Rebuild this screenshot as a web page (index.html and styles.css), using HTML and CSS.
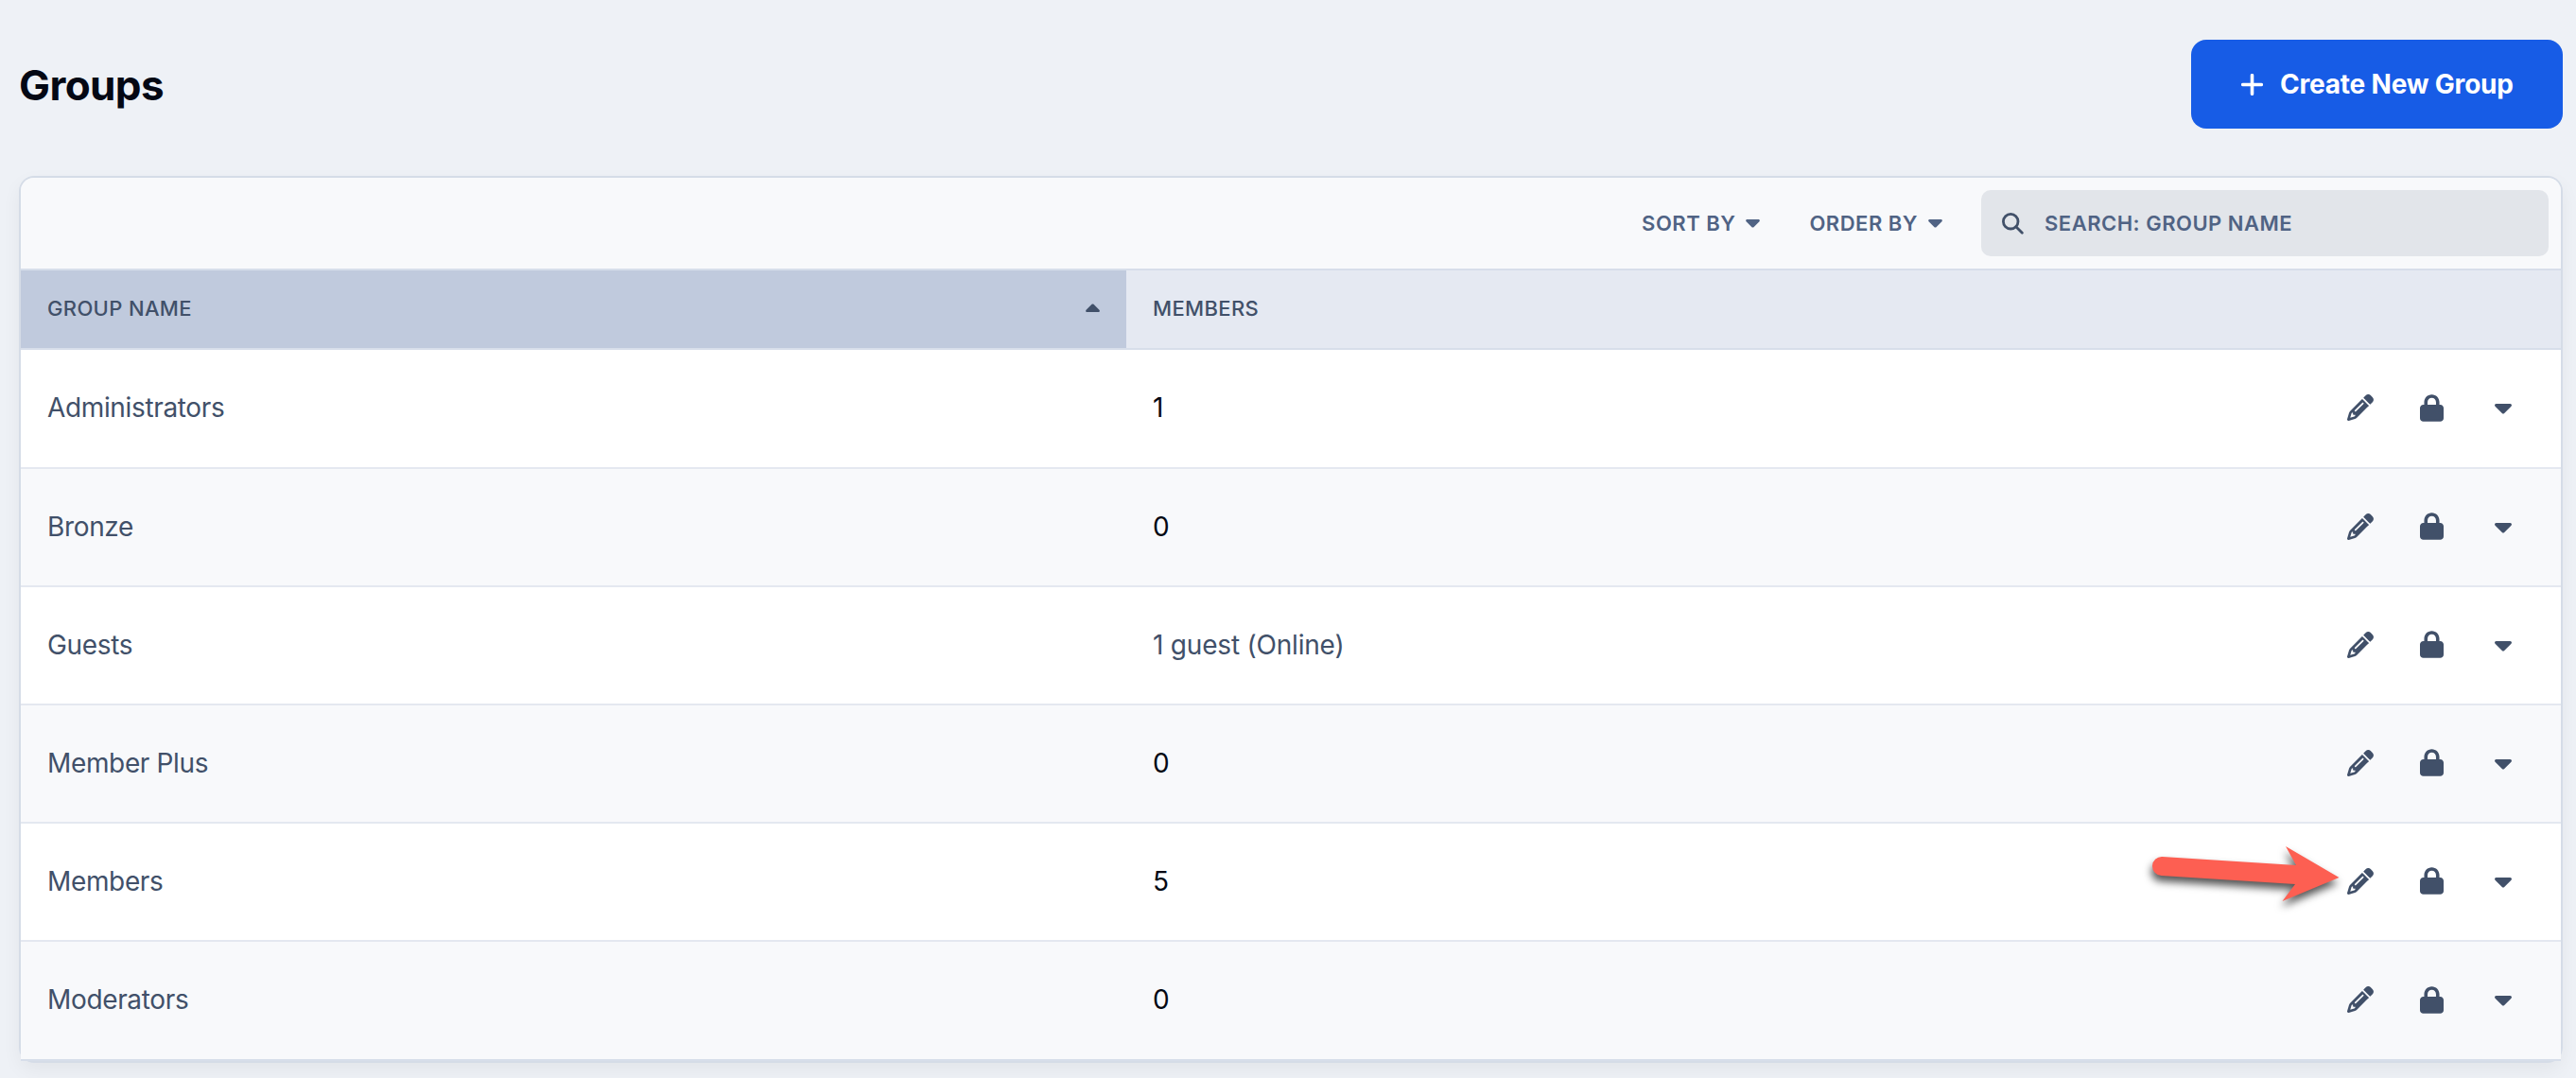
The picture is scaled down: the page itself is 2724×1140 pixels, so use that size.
FILE: index.html
```html
<!DOCTYPE html>
<html lang="en">
    <head>
        <meta charset="utf-8">
        <meta name="viewport" content="width=device-width, initial-scale=1">
        <title>Groups</title>

        <link rel="stylesheet" href="styles.css">
    </head>

    <body>
        <!-- icons shared by all the rows -->
        <svg class="sprite">
            <symbol id="pencil" viewBox="0 0 512 512"><path d="M410.3 231l11.3-11.3-33.9-33.9-62.1-62.1L291.7 89.8l-11.3 11.3-22.6 22.6L58.6 322.9c-10.4 10.4-18 23.3-22.2 37.4L1 480.7c-2.5 8.4-.2 17.5 6.1 23.7s15.3 8.5 23.7 6.1l120.3-35.4c14.1-4.2 27-11.8 37.4-22.2L387.7 253.7 410.3 231zM160 399.4l-9.1 22.7c-4 3.1-8.5 5.4-13.3 6.9L59.4 452l23-78.1c1.4-4.9 3.8-9.4 6.9-13.3l22.7-9.1v32c0 8.8 7.2 16 16 16h32zM362.7 18.7L348.3 33.2 325.7 55.8 314.3 67.1l33.9 33.9 62.1 62.1 33.9 33.9 11.3-11.3 22.6-22.6 14.5-14.5c25-25 25-65.5 0-90.5L453.3 18.7c-25-25-65.5-25-90.5 0zm-47.4 168l-144 144c-6.2 6.2-16.4 6.2-22.6 0s-6.2-16.4 0-22.6l144-144c6.2-6.2 16.4-6.2 22.6 0s6.2 16.4 0 22.6z"/></symbol>
            <symbol id="lock" viewBox="0 0 448 512"><path d="M144 144v48H304V144c0-44.2-35.8-80-80-80s-80 35.8-80 80zM80 192V144C80 64.5 144.5 0 224 0s144 64.5 144 144v48h16c35.3 0 64 28.7 64 64V448c0 35.3-28.7 64-64 64H64c-35.3 0-64-28.7-64-64V256c0-35.3 28.7-64 64-64H80z"/></symbol>
            <symbol id="caret" viewBox="0 0 18 11"><path d="M1.6 0h14.8c1.4 0 2.1 1.7 1.1 2.7l-7.3 7.3c-.7.7-1.7.7-2.4 0L.5 2.7C-.5 1.7.2 0 1.6 0z"/></symbol>
        </svg>

        <header class="top">
            <h1>Groups</h1>
            <button class="create">
                <svg class="plus" viewBox="0 0 23 23"><path d="M11.500 1.700v19.600M1.700 11.500h19.600"/></svg>
                Create New Group
            </button>
        </header>

        <div class="card">
            <div class="toolbar">
                <a class="filter">Sort by <svg class="caret"><use href="#caret"/></svg></a>
                <a class="filter order">Order by <svg class="caret"><use href="#caret"/></svg></a>
                <div class="search">
                    <svg class="glass" viewBox="0 0 23 23"><circle cx="9.200" cy="9.200" r="7.800"/><path d="M14.800 14.800l6.500 6.500"/></svg>
                    <span>Search: group name</span>
                </div>
            </div>

            <div class="row head">
                <div class="name">Group name <svg class="caret up"><use href="#caret"/></svg></div>
                <div class="members">Members</div>
            </div>
            <div class="row">
                <div class="name">Administrators</div>
                <div class="members">1</div>
                <div class="actions"><svg class="pencil"><use href="#pencil"/></svg><svg class="lock"><use href="#lock"/></svg><svg class="more"><use href="#caret"/></svg></div>
            </div>
            <div class="row">
                <div class="name">Bronze</div>
                <div class="members">0</div>
                <div class="actions"><svg class="pencil"><use href="#pencil"/></svg><svg class="lock"><use href="#lock"/></svg><svg class="more"><use href="#caret"/></svg></div>
            </div>
            <div class="row">
                <div class="name">Guests</div>
                <div class="members online">1 guest (Online)</div>
                <div class="actions"><svg class="pencil"><use href="#pencil"/></svg><svg class="lock"><use href="#lock"/></svg><svg class="more"><use href="#caret"/></svg></div>
            </div>
            <div class="row">
                <div class="name">Member Plus</div>
                <div class="members">0</div>
                <div class="actions"><svg class="pencil"><use href="#pencil"/></svg><svg class="lock"><use href="#lock"/></svg><svg class="more"><use href="#caret"/></svg></div>
            </div>
            <div class="row">
                <div class="name">Members</div>
                <div class="members">5</div>
                <div class="actions"><svg class="pencil"><use href="#pencil"/></svg><svg class="lock"><use href="#lock"/></svg><svg class="more"><use href="#caret"/></svg></div>
                <svg class="arrow" viewBox="0 0 198 60"><path d="M10.500 11L152 20 141 0l56.500 33L137.500 58 151 40 9.500 31A10 10 0 0 1 10.500 11z"/></svg>
            </div>
            <div class="row">
                <div class="name">Moderators</div>
                <div class="members">0</div>
                <div class="actions"><svg class="pencil"><use href="#pencil"/></svg><svg class="lock"><use href="#lock"/></svg><svg class="more"><use href="#caret"/></svg></div>
            </div>
        </div>
    </body>
</html>
```
FILE: styles.css
```css
* {
    box-sizing: border-box;
}

html {
    height: 100%;
    overflow: hidden;
    background: #eef1f6;
}

body {
    margin: 0;
    padding: 42px 14px 0 20px;
    height: 100%;
    overflow: hidden;
    color: #040814;
    font-family: Inter, sans-serif;
    font-size: 28px;
}

svg {
    display: block;
    flex: none;
    fill: currentColor;
}

.sprite {
    display: none;
}

.top {
    display: flex;
    justify-content: space-between;
    align-items: center;
    height: 94px;
}

h1 {
    margin: 2px 0 0;
    font-size: 44px;
    font-weight: 700;
    letter-spacing: -.6px;
}

.create {
    display: flex;
    align-items: center;
    gap: 18px;
    width: 393px;
    height: 94px;
    padding: 0 0 0 53px;
    border: none;
    border-radius: 16px;
    background: #175ce6;
    color: #fff;
    font: 700 28px Inter, sans-serif;
    letter-spacing: -.2px;
    white-space: nowrap;
}

.plus {
    width: 23px;
    height: 23px;
    fill: none;
    stroke: #fff;
    stroke-width: 3.6;
    stroke-linecap: round;
}

.card {
    margin-top: 50px;
    border: 2px solid #d5dce7;
    border-radius: 16px;
    box-shadow: 0 8px 20px #0000000d;
}

.toolbar {
    display: flex;
    justify-content: flex-end;
    align-items: center;
    height: 98px;
    padding-right: 13px;
    border-bottom: 2px solid #d7deea;
    border-radius: 14px 14px 0 0;
    background: #f8f9fb;
    color: #506384;
    font-size: 22px;
    font-weight: 600;
    letter-spacing: .5px;
    text-transform: uppercase;
}

.filter {
    display: flex;
    align-items: center;
    gap: 11px;
}

.order {
    margin: 0 41px 0 52px;
}

.caret {
    width: 15px;
    height: 9px;
}

.search {
    display: flex;
    align-items: center;
    gap: 22px;
    width: 600px;
    height: 70px;
    padding-left: 22px;
    border-radius: 10px;
    background: #e2e5ea;
}

.glass {
    width: 23px;
    height: 23px;
    fill: none;
    stroke: #415069;
    stroke-width: 2.8;
    stroke-linecap: round;
}

.row {
    display: flex;
    align-items: center;
    position: relative;
    height: 125px;
    padding-bottom: 2px;
    border-bottom: 2px solid #e4e8f0;
    background: #fff;
}

.row:nth-child(3) {
    height: 126px;
}

.row:nth-child(even) {
    background: #f8f9fb;
}

.row:last-child {
    height: 126px;
    border-color: #d7deea;
}

.row.head {
    align-items: stretch;
    height: 84px;
    padding-bottom: 0;
    border-color: #d7deea;
    background: #e5e9f2;
    font-size: 22px;
    font-weight: 500;
    letter-spacing: .35px;
    text-transform: uppercase;
}

.name {
    display: flex;
    justify-content: space-between;
    align-items: center;
    width: 1169px;
    padding: 0 28px;
    color: #415069;
    letter-spacing: -.35px;
}

.members {
    display: flex;
    flex: 1;
    align-items: center;
    padding-left: 28px;
    letter-spacing: -.2px;
}

.head .name, .head .members {
    padding-bottom: 2px;
    letter-spacing: inherit;
}

.head .name {
    background: #c0cadd;
}

.head .members, .online {
    color: #415069;
}

.up {
    margin-bottom: 2px;
    transform: rotate(180deg);
}

.actions {
    display: flex;
    align-items: center;
    padding-right: 52px;
    color: #415069;
}

.pencil {
    width: 28px;
    height: 28px;
    margin-right: 49px;
}

.lock {
    width: 25px;
    height: 29px;
    margin-right: 54px;
}

.more {
    width: 18px;
    height: 11px;
    margin-top: 3px;
}

/* callout pointing at the edit icon */
.arrow {
    position: absolute;
    top: 24px;
    left: 2254px;
    width: 198px;
    height: 60px;
    overflow: visible;
    color: #fd5f52;
    filter: drop-shadow(-1px 6px 4px #000a);
}
```
